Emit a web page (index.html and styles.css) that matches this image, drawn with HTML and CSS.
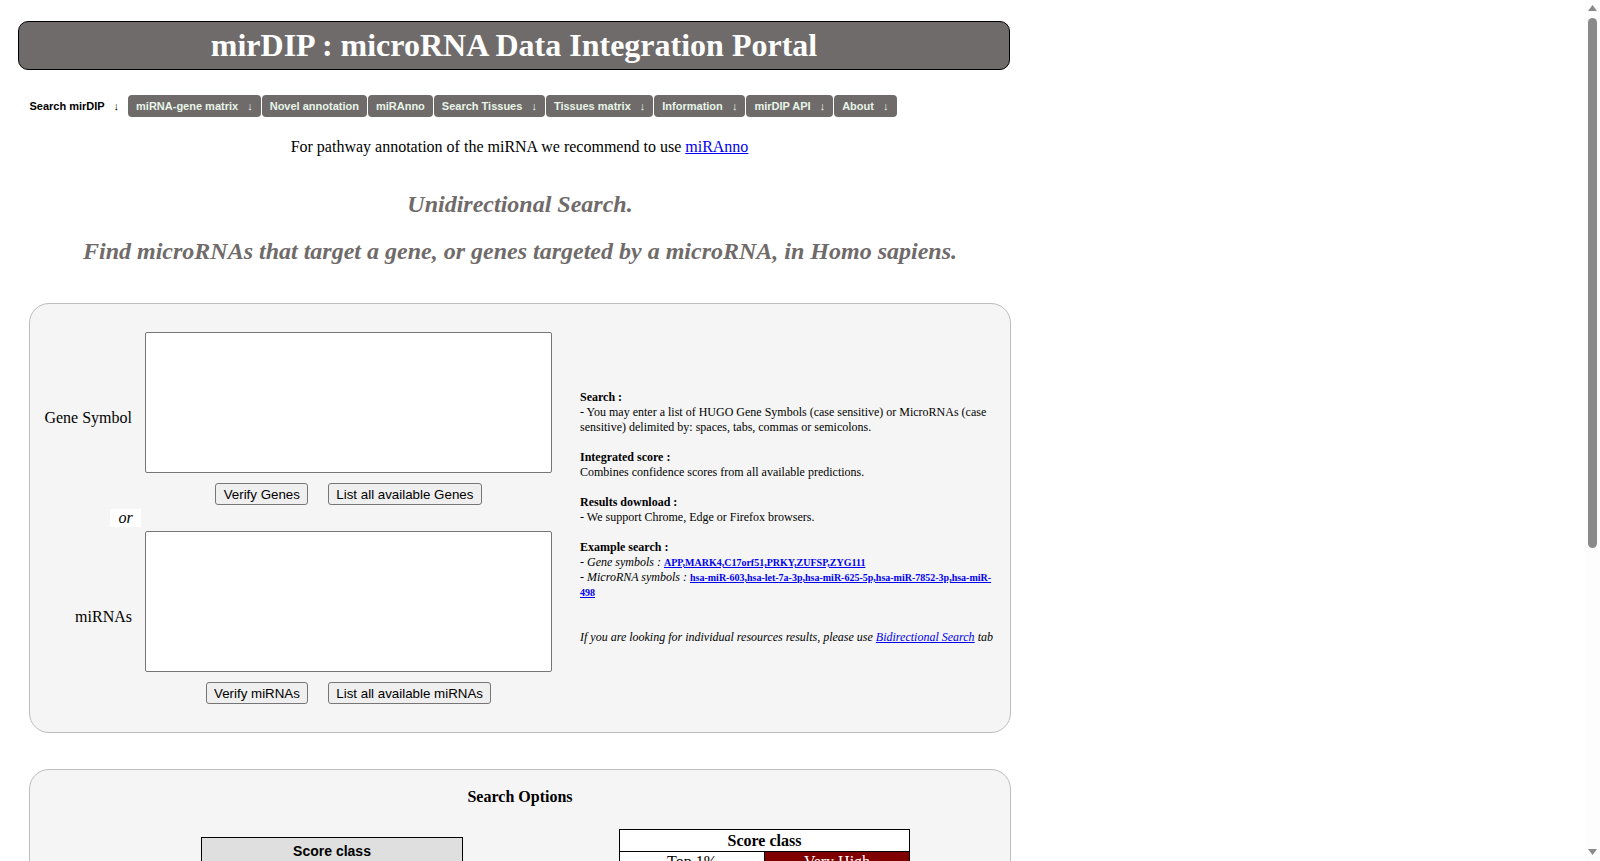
FILE: index.html
```html
<!DOCTYPE html>
<html>

<head>
    <title>mirDIP : microRNA Data Integration Portal</title>
    <link rel="stylesheet" href="styles.css">
</head>

<body>
    <div class="page">
        <h1 class="banner">mirDIP : microRNA Data Integration Portal</h1>

        <ul class="nav">
            <li class="nav-item active">Search mirDIP <span class="arrow">↓</span></li>
            <li class="nav-item">miRNA-gene matrix <span class="arrow">↓</span></li>
            <li class="nav-item">Novel annotation</li>
            <li class="nav-item">miRAnno</li>
            <li class="nav-item">Search Tissues <span class="arrow">↓</span></li>
            <li class="nav-item">Tissues matrix <span class="arrow">↓</span></li>
            <li class="nav-item">Information <span class="arrow">↓</span></li>
            <li class="nav-item">mirDIP API <span class="arrow">↓</span></li>
            <li class="nav-item">About <span class="arrow">↓</span></li>
        </ul>

        <p class="recommend">For pathway annotation of the miRNA we recommend to use <a href="#">miRAnno</a></p>

        <h2 class="subtitle first">Unidirectional Search.</h2>
        <h2 class="subtitle">Find microRNAs that target a gene, or genes targeted by a microRNA, in Homo sapiens.</h2>

        <div class="panel search-panel">
            <div class="inputs">
                <div class="input-row">
                    <label class="input-label">Gene Symbol</label>
                    <textarea class="symbols"></textarea>
                </div>
                <div class="buttons">
                    <button>Verify Genes</button>
                    <button>List all available Genes</button>
                </div>
                <div class="or"><span>or</span></div>
                <div class="input-row">
                    <label class="input-label">miRNAs</label>
                    <textarea class="symbols"></textarea>
                </div>
                <div class="buttons">
                    <button>Verify miRNAs</button>
                    <button>List all available miRNAs</button>
                </div>
            </div>

            <div class="help">
                <b>Search :</b><br>
                - You may enter a list of HUGO Gene Symbols (case sensitive) or MicroRNAs (case sensitive) delimited by: spaces, tabs, commas or semicolons.<br>
                <br>
                <b>Integrated score :</b><br>
                Combines confidence scores from all available predictions.<br>
                <br>
                <b>Results download :</b><br>
                - We support Chrome, Edge or Firefox browsers.<br>
                <br>
                <b>Example search :</b><br>
                - <i>Gene symbols :</i> <a href="#" class="example">APP,MARK4,C17orf51,PRKY,ZUFSP,ZYG111</a><br>
                - <i>MicroRNA symbols :</i> <a href="#" class="example">hsa-miR-603,hsa-let-7a-3p,hsa-miR-625-5p,hsa-miR-7852-3p,hsa-miR-498</a><br>
                <br>
                <br>
                <i>If you are looking for individual resources results, please use <a href="#">Bidirectional Search</a> tab</i>
            </div>
        </div>

        <div class="panel options-panel">
            <h3 class="options-title">Search Options</h3>
            <div class="options">
                <table class="score-select">
                    <tr>
                        <th>Score class</th>
                    </tr>
                    <tr>
                        <td>
                            <select>
                                <option>Very High</option>
                                <option>High</option>
                                <option>Medium</option>
                                <option>Low</option>
                            </select>
                        </td>
                    </tr>
                </table>
                <table class="score-legend">
                    <tr>
                        <th colspan="2">Score class</th>
                    </tr>
                    <tr>
                        <td>Top 1%</td>
                        <td class="very-high">Very High</td>
                    </tr>
                    <tr>
                        <td>Top 5%</td>
                        <td class="high">High</td>
                    </tr>
                    <tr>
                        <td>Top 1/3</td>
                        <td class="medium">Medium</td>
                    </tr>
                    <tr>
                        <td>Remaining</td>
                        <td class="low">Low</td>
                    </tr>
                </table>
            </div>
        </div>
    </div>

    <!-- page scrollbar as it shows in the browser window -->
    <div class="scrollbar">
        <svg class="scroll-up" width="9" height="6" viewBox="0 0 9 6">
            <path d="M4.5 0L9 6H0Z" fill="#8A8A8A" />
        </svg>
        <div class="scroll-thumb"></div>
        <svg class="scroll-down" width="9" height="6" viewBox="0 0 9 6">
            <path d="M0 0H9L4.5 6Z" fill="#8A8A8A" />
        </svg>
    </div>
</body>

</html>
```
FILE: styles.css
```css
body {
    margin: 0;
    background-color: #FFFFFF;
    color: #000000;
    font-family: "Liberation Serif", "Times New Roman", serif;
}

.page {
    width: 1011px;
    padding: 21px 0 40px 18px;
    box-sizing: border-box;
    min-height: 1350px;
}

.banner {
    margin: 0 1px 0 0;
    height: 47px;
    line-height: 47px;
    background-color: #6F6B6A;
    border: 1px solid #000000;
    border-radius: 10px;
    color: #FFFFFF;
    font-size: 32px;
    font-weight: bold;
    text-align: center;
}

.nav {
    list-style: none;
    display: flex;
    gap: 1px;
    margin: 25px 0 0;
    padding: 0 0 0 3.5px;
}

.nav-item {
    padding: 0 8px;
    height: 22px;
    line-height: 22px;
    background-color: #6F6B6A;
    border-radius: 4px;
    color: #E8F5E8;
    font-family: "Liberation Sans", Arial, sans-serif;
    font-size: 11px;
    font-weight: bold;
    white-space: nowrap;
}

.nav-item.active {
    background-color: transparent;
    color: #000000;
}

.arrow {
    margin-left: 6px;
    font-weight: normal;
}

.recommend {
    margin: 21px 0 0;
    text-align: center;
    font-size: 16px;
    line-height: 18px;
    padding-left: 10px;
}

.subtitle {
    margin: 0;
    padding-left: 11px;
    text-align: center;
    color: #6F6B6A;
    font-size: 24px;
    font-style: italic;
    font-weight: bold;
    line-height: 28px;
}

.subtitle.first {
    margin-top: 34px;
    margin-bottom: 19px;
}

.panel {
    margin-left: 11px;
    background-color: #F5F5F5;
    border: 1px solid #BDBDBD;
    border-radius: 20px;
}

.search-panel {
    display: flex;
    margin-top: 38px;
    height: 430px;
    box-sizing: border-box;
    padding: 28px 0 0 0;
}

.inputs {
    width: 522px;
    flex: none;
}

.input-row {
    display: flex;
    align-items: center;
}

.input-label {
    width: 102px;
    flex: none;
    text-align: right;
    font-size: 16px;
    padding-top: 30px;
}

.symbols {
    display: block;
    width: 407px;
    height: 141px;
    margin: 0 0 0 13px;
    padding: 2px;
    box-sizing: border-box;
    background-color: #FFFFFF;
    border: 1px solid #767676;
    border-radius: 2px;
    resize: none;
}

.buttons {
    display: flex;
    justify-content: center;
    gap: 20px;
    margin: 10px 0 0 115px;
    width: 407px;
}

button {
    height: 22px;
    padding: 0 7.2px;
    background-color: #EFEFEF;
    border: 1px solid #767676;
    border-radius: 3px;
    color: #000000;
    font-family: "Liberation Sans", Arial, sans-serif;
    font-size: 13.33px;
}

.or {
    margin: 4px 0 4px 80px;
    font-size: 16px;
    font-style: italic;
    line-height: 18px;
}

.or span {
    display: inline-block;
    padding: 0 8.4px;
    background-color: #FFFFFF;
}

.help {
    width: 415px;
    margin: 58px 0 0 28px;
    font-size: 12px;
    line-height: 15px;
}

.example {
    font-size: 10px;
    font-weight: bold;
}

.options-panel {
    margin-top: 36px;
    padding: 18px 0 0;
    height: 500px;
    box-sizing: border-box;
}

.options-title {
    margin: 0;
    text-align: center;
    font-size: 16px;
    line-height: 18px;
}

.options {
    display: flex;
    align-items: flex-start;
    margin-top: 23px;
    padding-left: 171px;
}

table {
    border-collapse: collapse;
}

.score-select {
    width: 262px;
    margin-top: 8px;
    font-family: "Liberation Sans", Arial, sans-serif;
}

.score-select th {
    background-color: #DFDFDF;
    border: 1px solid #000000;
    font-size: 14px;
    line-height: 25px;
}

.score-select td {
    border: 1px solid #000000;
    text-align: center;
    padding: 6px;
}

.score-legend {
    width: 291px;
    margin-left: 156px;
    background-color: #FFFFFF;
}

.score-legend th,
.score-legend td {
    width: 50%;
    border: 1px solid #000000;
    text-align: center;
    font-size: 16px;
    line-height: 18px;
    padding: 1px;
}

.score-legend th {
    padding-top: 2px;
}

.very-high {
    background-color: #800000;
    color: #FFFFFF;
}

.high {
    background-color: #C00000;
    color: #FFFFFF;
}

.medium {
    background-color: #FF8000;
}

.low {
    background-color: #FFFF80;
}

.scrollbar {
    position: fixed;
    top: 0;
    right: 0;
    bottom: 0;
    width: 15px;
    background-color: #FDFDFD;
}

.scroll-up,
.scroll-down,
.scroll-thumb {
    position: absolute;
    left: 3px;
}

.scroll-up {
    top: 5px;
}

.scroll-down {
    top: 849px;
}

.scroll-thumb {
    top: 18px;
    width: 9px;
    height: 530px;
    background-color: #8A8A8A;
    border-radius: 5px;
}
```
